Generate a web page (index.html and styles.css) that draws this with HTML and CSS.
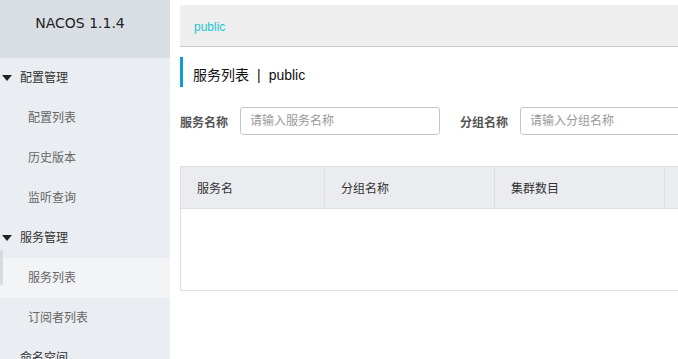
FILE: index.html
```html
<!DOCTYPE html>
<html lang="zh-CN">
<head>
  <meta charset="UTF-8">
  <meta name="viewport" content="width=device-width, initial-scale=1.0">
  <title>Nacos</title>
  <link rel="stylesheet" href="styles.css">
</head>
<body>
  <div class="layout">
    <aside class="sidebar">
      <div class="logo">NACOS 1.1.4</div>
      <ul class="menu">
        <li class="menu-group">配置管理</li>
        <li class="menu-item">配置列表</li>
        <li class="menu-item">历史版本</li>
        <li class="menu-item">监听查询</li>
        <li class="menu-group">服务管理</li>
        <li class="menu-item active">服务列表</li>
        <li class="menu-item">订阅者列表</li>
        <li class="menu-group plain">命名空间</li>
      </ul>
    </aside>

    <main class="content">
      <div class="crumb">public</div>

      <h2 class="page-title">服务列表<span class="sep">|</span><span class="ns">public</span></h2>

      <div class="filters">
        <label class="field">
          <span class="field-label">服务名称</span>
          <input type="text" placeholder="请输入服务名称">
        </label>
        <label class="field">
          <span class="field-label">分组名称</span>
          <input type="text" placeholder="请输入分组名称">
        </label>
      </div>

      <div class="table">
        <div class="table-head">
          <div class="cell c-name">服务名</div>
          <div class="cell c-group">分组名称</div>
          <div class="cell c-cluster">集群数目</div>
          <div class="cell c-more"></div>
        </div>
        <div class="table-body"></div>
      </div>
    </main>
  </div>
</body>
</html>
```

FILE: styles.css
```css
:root {
  --side-bg: #eaedf1;
  --logo-bg: #d9dee5;
  --active-bg: #f3f4f6;
  --text: #333;
  --text-light: #666;
  --accent: #0aa0d5;
  --crumb: #1cc6d6;
  --border: #dcdee3;
  --font: "Liberation Sans", "Noto Sans CJK SC", sans-serif;
}

* {
  margin: 0;
  padding: 0;
  box-sizing: border-box;
}

body {
  font-family: var(--font);
  color: var(--text);
  background: #fff;
  overflow: hidden;
}

.layout {
  display: flex;
  height: 359px;
}

/* sidebar */

.sidebar {
  width: 170px;
  flex-shrink: 0;
  background: var(--side-bg);
}

.logo {
  height: 58px;
  background: var(--logo-bg);
  font-family: "DejaVu Sans", sans-serif;
  font-size: 14px;
  line-height: 47px;
  text-align: center;
  color: #222;
  padding-right: 10px;
}

.menu {
  list-style: none;
}

.menu li {
  height: 40px;
  line-height: 41px;
  font-size: 12px;
  position: relative;
}

.menu-group {
  padding-left: 20px;
  color: var(--text);
}

.menu-group::before {
  content: '';
  position: absolute;
  left: 2px;
  top: 17px;
  border-left: 5px solid transparent;
  border-right: 5px solid transparent;
  border-top: 6px solid #222;
}

.menu-group.plain::before {
  display: none;
}

.menu-item {
  padding-left: 28px;
  color: var(--text-light);
}

.menu-item.active {
  background: var(--active-bg);
}

.menu-item.active::before {
  content: '';
  position: absolute;
  left: 0;
  top: -8px;
  width: 3px;
  height: 35px;
  background: #d6dae1;
  border-radius: 0 2px 2px 0;
}

/* content */

.content {
  flex: 1;
  min-width: 0;
  padding: 5px 0 0 10px;
}

.crumb {
  width: 900px;
  height: 42px;
  line-height: 44px;
  background: #eee;
  border-bottom: 1px solid #ccc;
  padding-left: 14px;
  font-size: 12px;
  color: var(--crumb);
}

.page-title {
  margin-top: 10px;
  height: 30px;
  line-height: 36px;
  border-left: 3px solid var(--accent);
  padding-left: 10px;
  font-size: 14px;
  font-weight: normal;
  color: #111;
}

.page-title .sep {
  margin: 0 8px;
}

.filters {
  display: flex;
  gap: 20px;
  margin-top: 20px;
  width: 900px;
}

.field {
  display: flex;
  align-items: center;
  gap: 12px;
}

.field-label {
  font-size: 12px;
  font-weight: bold;
  color: #555;
}

.field input {
  width: 200px;
  height: 28px;
  border: 1px solid #c4c6cf;
  border-radius: 3px;
  padding: 0 9px;
  font-family: var(--font);
  font-size: 12px;
  color: var(--text);
  outline: none;
}

.field input::placeholder {
  color: #999;
}

.table {
  margin-top: 31px;
  width: 900px;
  border: 1px solid var(--border);
}

.table-head {
  display: flex;
  height: 42px;
  background: #ebecf0;
  border-bottom: 1px solid var(--border);
}

.cell {
  padding-left: 16px;
  line-height: 44px;
  font-size: 12px;
  color: var(--text);
  border-right: 1px solid var(--border);
}

.c-name {
  width: 144px;
}

.c-group {
  width: 170px;
}

.c-cluster {
  width: 170px;
}

.c-more {
  flex: 1;
  border-right: none;
}

.table-body {
  height: 81px;
}
```
